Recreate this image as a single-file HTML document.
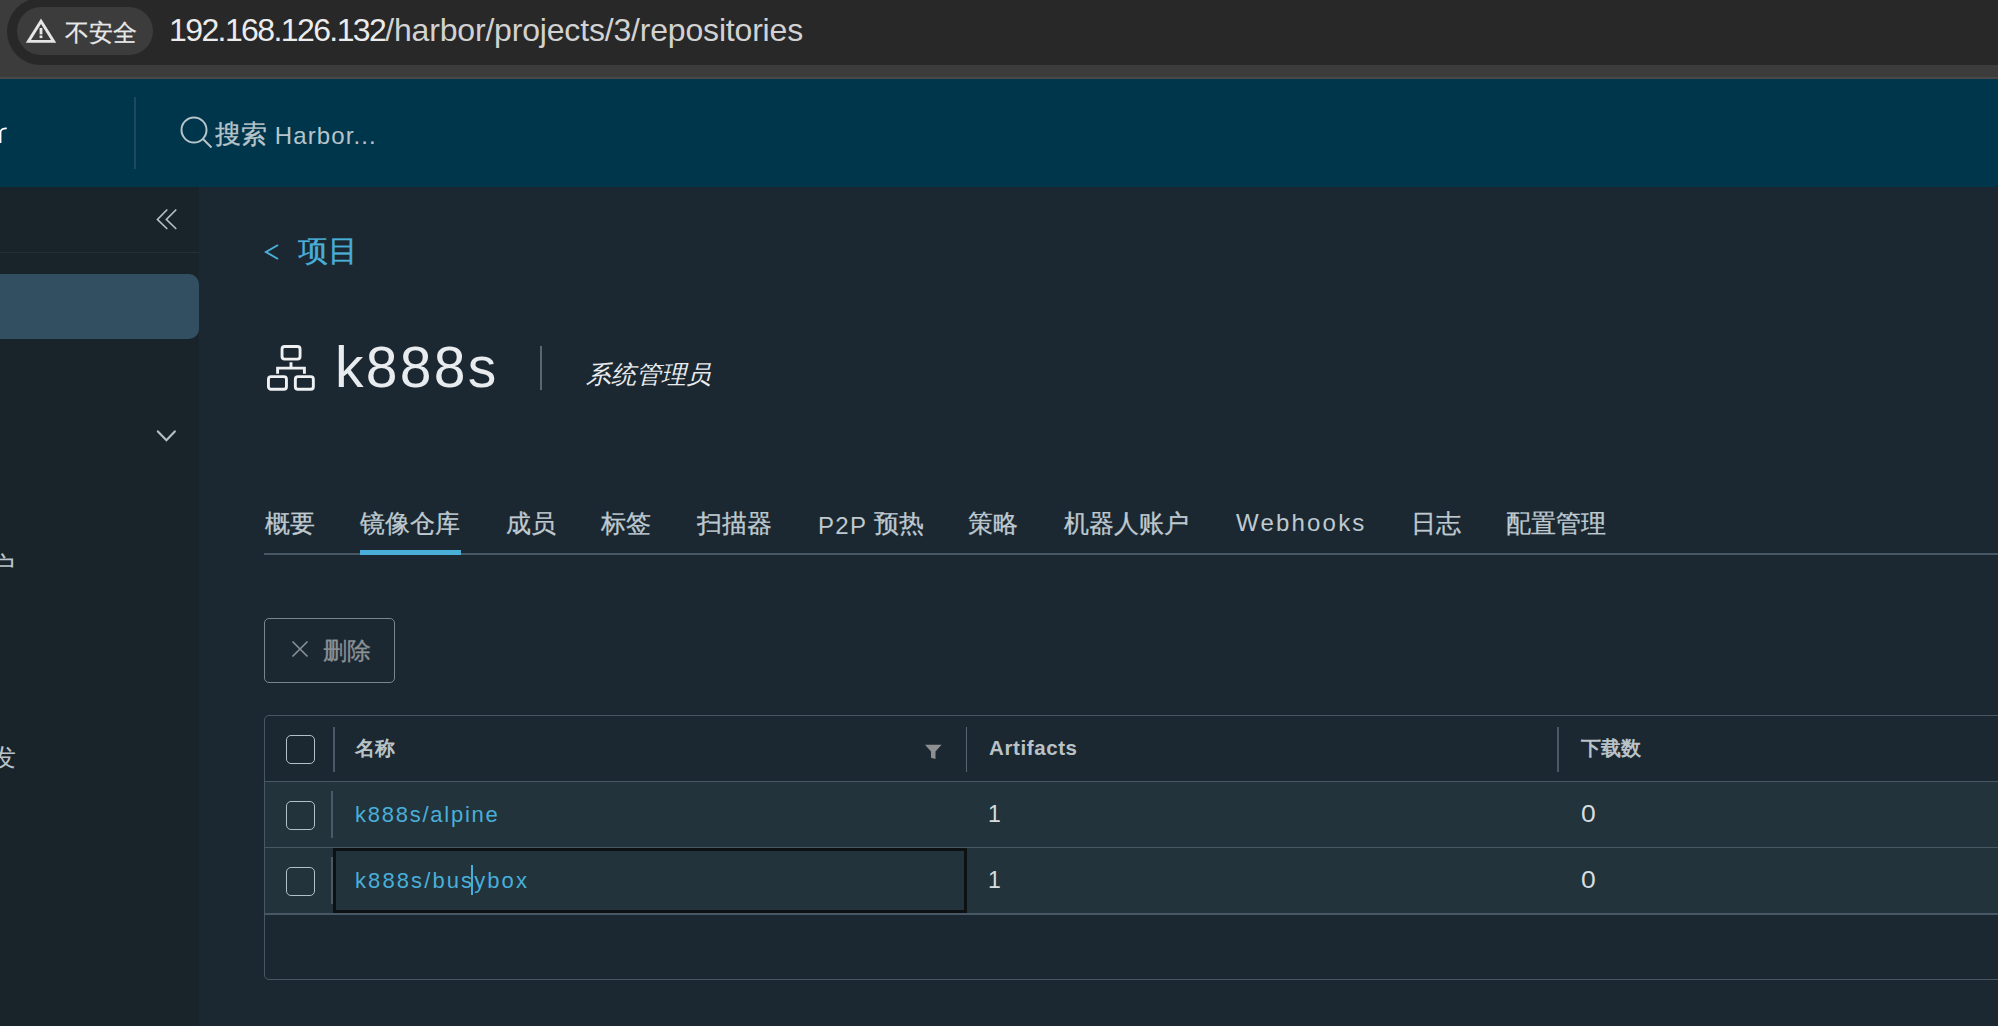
<!DOCTYPE html>
<html><head><meta charset="utf-8">
<style>
*{margin:0;padding:0;box-sizing:border-box}
html,body{width:1998px;height:1026px;overflow:hidden;background:#1b2831;font-family:"Liberation Sans",sans-serif}
.a{position:absolute}
.t{position:absolute;white-space:nowrap;line-height:1}
#chrome{left:0;top:0;width:1998px;height:79px;background:#3c3c3c}
#pill{left:7px;top:-2px;width:2100px;height:67px;background:#282828;border-radius:33.5px}
#chip{left:17px;top:7px;width:136px;height:48px;background:#3c3c3c;border-radius:24px}
#hdr{left:0;top:79px;width:1998px;height:108px;background:#00364c}
#side{left:0;top:187px;width:199px;height:839px;background:#19232a}
#main{left:199px;top:187px;width:1799px;height:839px;background:#1c2831}
.tab{position:absolute;top:511px;font-size:25.4px;color:#bec9d0;-webkit-text-stroke:0.3px #bec9d0;white-space:nowrap;line-height:1}
.cb{position:absolute;left:286px;width:29px;height:29px;border:1.5px solid #b3c0c7;border-radius:5px}
.vd{position:absolute;width:2px;background:#4a5967}
.hl{position:absolute;left:264px;width:1734px;height:1px;background:#485764}
</style></head><body>
<div id="chrome" class="a"></div>
<div id="pill" class="a"></div>
<div id="chip" class="a"></div>
<!-- warning icon -->
<svg class="a" style="left:24px;top:16px" width="34" height="30" viewBox="0 0 34 30">
<path d="M17 5.2 L29.6 25.4 L4.4 25.4 Z" fill="none" stroke="#e6e6e6" stroke-width="2.9" stroke-linejoin="miter"/>
<rect x="15.6" y="12" width="2.8" height="6.4" fill="#e6e6e6"/>
<rect x="15.6" y="19.5" width="2.8" height="2.6" fill="#e6e6e6"/>
</svg>
<div class="t" style="left:65px;top:21px;font-size:24px;color:#e8e8e8;-webkit-text-stroke:0.25px #e8e8e8">不安全</div>
<div class="t" style="left:169px;top:14px;font-size:32px;color:#ececec;letter-spacing:-1.6px">192.168.126.132<span style="color:#d2d2d2;letter-spacing:-0.18px">/harbor/projects/3/repositories</span></div>

<div class="a" style="left:0;top:77px;width:1998px;height:2px;background:#484848"></div>
<div id="hdr" class="a"></div>
<div class="a" style="left:134px;top:97px;width:2px;height:72px;background:#1f4a5e"></div>
<svg class="a" style="left:0;top:126px" width="10" height="18" viewBox="0 0 10 18"><path d="M0.5 17 V6 Q1 2.2 6.8 2.4" fill="none" stroke="#fff" stroke-width="1.8"/></svg>
<svg class="a" style="left:178px;top:114px" width="38" height="38" viewBox="0 0 38 38">
<circle cx="16" cy="16" r="12.5" fill="none" stroke="#b7c4ca" stroke-width="2"/>
<line x1="25" y1="25" x2="33.5" y2="33.5" stroke="#b7c4ca" stroke-width="2"/>
</svg>
<div class="t" style="left:215px;top:121px;font-size:26px;color:#b7c4ca;-webkit-text-stroke:0.3px #b7c4ca">搜索<span style="-webkit-text-stroke:0;font-size:24px;letter-spacing:1.1px;position:relative;top:1px"> Harbor...</span></div>

<div id="side" class="a"></div>
<svg class="a" style="left:152px;top:204px" width="30" height="30" viewBox="0 0 30 30">
<path d="M14.8 6 L5.5 15.5 L14.8 24.5 M23.8 6 L14.4 15.5 L23.8 24.5" fill="none" stroke="#b4c0c6" stroke-width="1.7" stroke-linecap="round"/>
</svg>
<div class="a" style="left:0;top:252px;width:199px;height:1px;background:#242e35"></div>
<div class="a" style="left:0;top:274px;width:199px;height:65px;background:#324f61;border-radius:0 10px 10px 0"></div>
<svg class="a" style="left:152px;top:424px" width="30" height="24" viewBox="0 0 30 24">
<path d="M5.9 7.4 L14.4 16.2 L22.8 7.4" fill="none" stroke="#b4c0c6" stroke-width="2.2" stroke-linecap="round"/>
</svg>
<div class="t" style="left:-11px;top:553px;font-size:26px;color:#b9c4ca">户</div>
<div class="t" style="left:-9px;top:745px;font-size:25px;color:#b9c4ca">发</div>

<div id="main" class="a"></div>
<!-- breadcrumb -->
<svg class="a" style="left:262px;top:242px" width="20" height="20" viewBox="0 0 20 20">
<path d="M16 3 L4 10 L16 17" fill="none" stroke="#49afd9" stroke-width="2"/>
</svg>
<div class="t" style="left:298px;top:236px;font-size:30px;color:#49afd9;-webkit-text-stroke:0.3px #49afd9">项目</div>
<!-- project icon -->
<svg class="a" style="left:264px;top:343px" width="54" height="50" viewBox="0 0 54 50">
<g fill="none" stroke="#eef0f2" stroke-width="2.9">
<rect x="18.05" y="3.55" width="18" height="12.6" rx="2.6"/>
<path d="M27 19.2 V25.1 M13.6 30.8 V25.1 H40.4 V30.8" stroke-linejoin="miter"/>
<rect x="4.45" y="33.65" width="18" height="12.6" rx="2.6"/>
<rect x="31.35" y="33.65" width="18" height="12.6" rx="2.6"/>
</g>
</svg>
<div class="t" style="left:335px;top:339px;font-size:57px;color:#e9ecef;letter-spacing:2.3px">k888s</div>
<div class="a" style="left:540px;top:346px;width:2px;height:44px;background:#5a6770"></div>
<div class="t" style="left:586px;top:362px;font-size:25px;color:#e9ecef;font-style:italic">系统管理员</div>

<!-- tabs -->
<div class="tab" style="left:265px">概要</div>
<div class="tab" style="left:360px">镜像仓库</div>
<div class="tab" style="left:506px">成员</div>
<div class="tab" style="left:601px">标签</div>
<div class="tab" style="left:697px">扫描器</div>
<div class="tab" style="left:818px"><span style="font-size:24px;letter-spacing:1.3px;position:relative;top:2px;-webkit-text-stroke:0">P2P</span> 预热</div>
<div class="tab" style="left:968px">策略</div>
<div class="tab" style="left:1064px">机器人账户</div>
<div class="tab" style="left:1236px"><span style="font-size:24px;letter-spacing:2.2px;position:relative;top:-1px;-webkit-text-stroke:0">Webhooks</span></div>
<div class="tab" style="left:1411px">日志</div>
<div class="tab" style="left:1506px">配置管理</div>
<div class="a" style="left:264px;top:553px;width:1734px;height:2px;background:#485764"></div>
<div class="a" style="left:360px;top:550px;width:101px;height:5px;background:#49afd9"></div>

<!-- delete button -->
<div class="a" style="left:264px;top:618px;width:131px;height:65px;border:1.5px solid #7d858a;border-radius:5px"></div>
<svg class="a" style="left:290px;top:639px" width="20" height="20" viewBox="0 0 20 20">
<path d="M2.5 2.5 L17.5 17.5 M17.5 2.5 L2.5 17.5" stroke="#8a9196" stroke-width="1.6"/>
</svg>
<div class="t" style="left:323px;top:639px;font-size:24px;color:#8a9196;-webkit-text-stroke:0.35px #8a9196">删除</div>

<!-- table -->
<div class="a" style="left:264px;top:715px;width:1800px;height:265px;border:1px solid #485764;border-radius:5px"></div>
<div class="a" style="left:265px;top:782px;width:1733px;height:131px;background:#22333c"></div>
<div class="hl" style="top:781px"></div>
<div class="hl" style="top:847px"></div>
<div class="hl" style="top:913px;height:2px"></div>
<div class="cb" style="top:735px"></div>
<div class="cb" style="top:801px"></div>
<div class="cb" style="top:867px"></div>
<div class="vd" style="left:333px;top:727px;height:45px"></div>
<div class="vd" style="left:966px;top:727px;height:45px;width:1px;background:#56656f"></div>
<div class="vd" style="left:1557px;top:727px;height:45px"></div>
<div class="vd" style="left:331px;top:791px;height:47px"></div>
<div class="vd" style="left:331px;top:857px;height:47px"></div>
<div class="t" style="left:355px;top:738px;font-size:20px;font-weight:bold;color:#b9c2c7">名称</div>
<svg class="a" style="left:924px;top:743px" width="19" height="18" viewBox="0 0 19 18">
<path d="M1 1.8 H17.6 L11.5 8.6 V16.1 L7 14.7 V8.6 Z" fill="#8e8f90"/>
</svg>
<div class="t" style="left:989px;top:738px;font-size:20.5px;font-weight:bold;color:#b9c2c7;letter-spacing:0.6px">Artifacts</div>
<div class="t" style="left:1581px;top:738px;font-size:20px;font-weight:bold;color:#b9c2c7">下载数</div>

<div class="t" style="left:355px;top:803.5px;font-size:22px;color:#49afd9;letter-spacing:1.75px">k888s/alpine</div>
<div class="t" style="left:988px;top:803px;font-size:23px;color:#d8dde0">1</div>
<div class="t" style="left:1581px;top:803px;font-size:23px;color:#d8dde0;transform:scaleX(1.15);transform-origin:left">0</div>
<div class="a" style="left:333px;top:848px;width:634px;height:65px;border:3px solid #0d1114"></div>
<div class="t" style="left:355px;top:870px;font-size:22px;color:#49afd9;letter-spacing:2.1px">k888s/busybox</div>
<div class="a" style="left:471px;top:865px;width:2px;height:30px;background:#49afd9"></div>
<div class="t" style="left:988px;top:869px;font-size:23px;color:#d8dde0">1</div>
<div class="t" style="left:1581px;top:869px;font-size:23px;color:#d8dde0;transform:scaleX(1.15);transform-origin:left">0</div>
</body></html>
